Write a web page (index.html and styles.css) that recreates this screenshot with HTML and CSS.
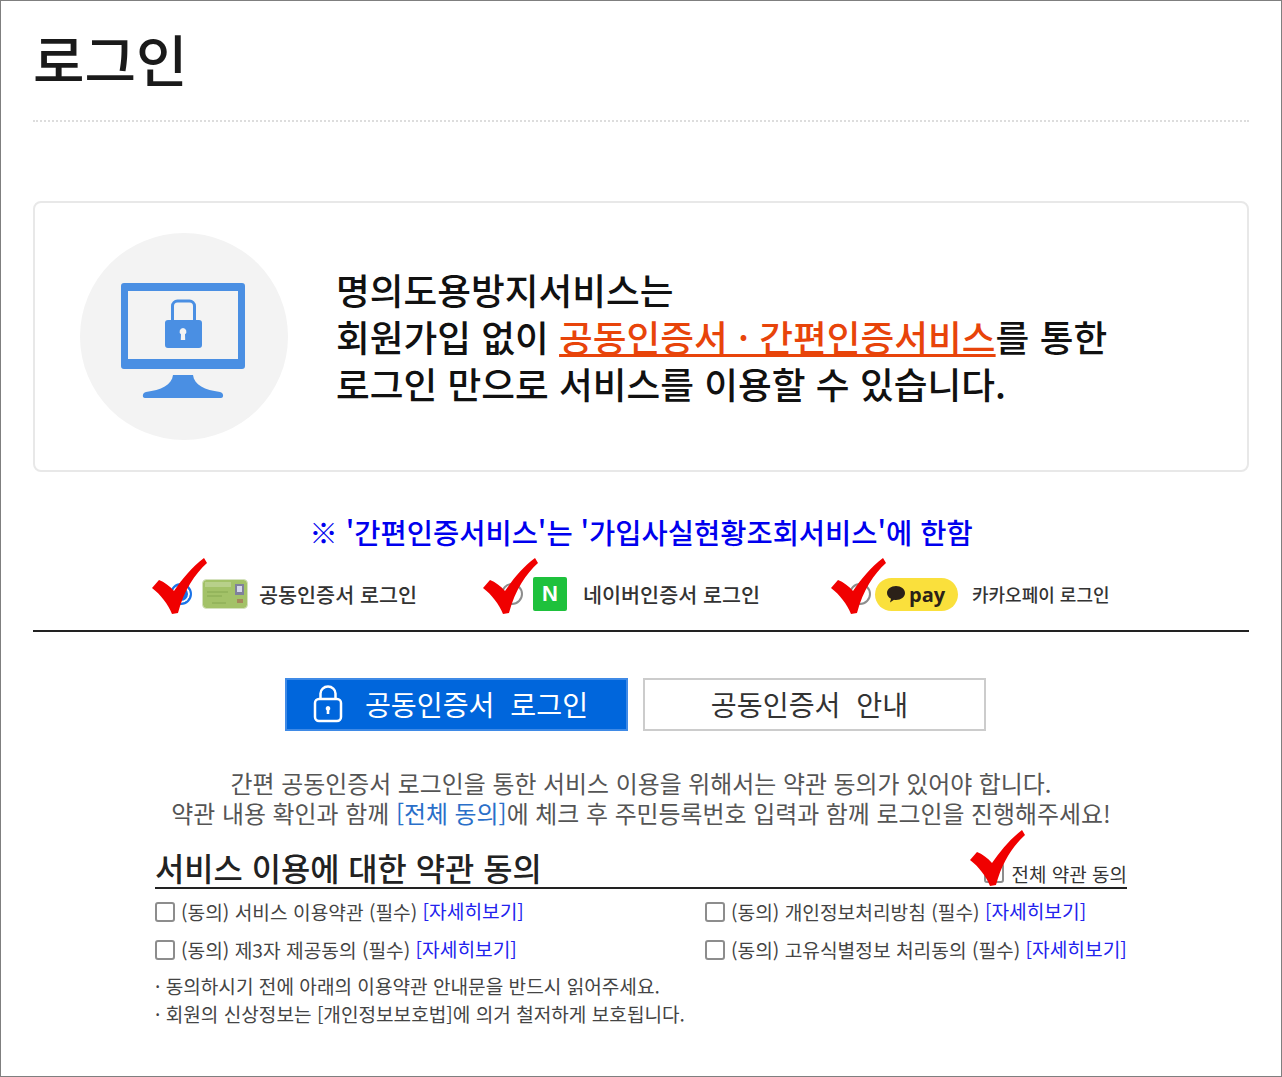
FILE: index.html
```html
<!DOCTYPE html>
<html lang="ko">
<head>
  <meta charset="UTF-8">
  <title>로그인</title>
  <link rel="stylesheet" href="styles.css">
</head>
<body>

<div class="frame">
  <h1 class="page-title">로그인</h1>

  <div class="intro-box">
    <div class="intro-icon">
      <svg class="monitor" width="124" height="115" viewBox="0 0 124 115">
        <path fill="#4a8fe3" fill-rule="evenodd" d="M3 0H121a3 3 0 0 1 3 3V83a3 3 0 0 1-3 3H3a3 3 0 0 1-3-3V3a3 3 0 0 1 3-3ZM7 8V76H117V8Z"/>
        <path fill="#4a8fe3" d="M52 92H72C73 102 84 107 99 109C103 110 103 115 100 115H24C21 115 21 110 25 109C40 107 51 102 52 92Z"/>
        <path fill="none" stroke="#4a8fe3" stroke-width="3" d="M51.500 38V23a5 5 0 0 1 5-5H68.500a5 5 0 0 1 5 5V38"/>
        <path fill="#4a8fe3" fill-rule="evenodd" d="M47 37H78a3 3 0 0 1 3 3V62a3 3 0 0 1-3 3H47a3 3 0 0 1-3-3V40a3 3 0 0 1 3-3ZM62 45a3.500 3.500 0 0 0-2 6.300L59.800 57H64.200L64 51.300A3.500 3.500 0 0 0 62 45Z"/>
      </svg>
    </div>
    <p class="intro-text">
      명의도용방지서비스는<br>
      회원가입 없이 <u class="accent">공동인증서 · 간편인증서비스</u>를 통한<br>
      로그인 만으로 서비스를 이용할 수 있습니다.
    </p>
  </div>

  <p class="notice">※ '간편인증서비스'는 '가입사실현황조회서비스'에 한함</p>

  <div class="methods">
    <label class="method method-cert">
      <span class="radio on"></span>
      <svg class="cert-card" width="46" height="30" viewBox="0 0 46 30">
        <rect x="0.500" y="0.500" width="45" height="29" rx="4" fill="#a3c268" stroke="#d5e2bf"/>
        <rect x="3" y="3" width="26" height="5" fill="#b8d08a"/>
        <path d="M5 13H26M5 17H20M10 24H24" stroke="#86a850" stroke-width="1"/>
        <rect x="33" y="5" width="9" height="11" fill="#7f809c"/>
        <rect x="35" y="7" width="5" height="6" fill="#d5d8ea"/>
        <rect x="35" y="20" width="6" height="4" fill="#a5865a"/>
      </svg>
      <span class="method-name">공동인증서 로그인</span>
      <svg class="check" viewBox="0 0 56 58"><path d="M1 30L8 22C13 24 19 28 23 33C31 21 41 9 53 0L56 5C44 16 33 32 27 55L21 56C17 46 10 37 1 30Z"/></svg>
    </label>
    <label class="method method-naver">
      <span class="radio"></span>
      <span class="naver-logo">N</span>
      <span class="method-name">네이버인증서 로그인</span>
      <svg class="check" viewBox="0 0 56 58"><path d="M1 30L8 22C13 24 19 28 23 33C31 21 41 9 53 0L56 5C44 16 33 32 27 55L21 56C17 46 10 37 1 30Z"/></svg>
    </label>
    <label class="method method-kakao">
      <span class="radio"></span>
      <span class="kakao-logo">
        <svg width="20" height="18" viewBox="0 0 20 18"><path fill="#2b2118" d="M10 1C15 1 19 4 19 8C19 12 15 15 10 15C9 15 8.500 15 8 14.800L4 17.500L5 13.700C2.500 12.500 1 10.500 1 8C1 4 5 1 10 1Z"/></svg>
        pay
      </span>
      <span class="method-name small">카카오페이 로그인</span>
      <svg class="check" viewBox="0 0 56 58"><path d="M1 30L8 22C13 24 19 28 23 33C31 21 41 9 53 0L56 5C44 16 33 32 27 55L21 56C17 46 10 37 1 30Z"/></svg>
    </label>
  </div>

  <div class="tabs">
    <a class="tab active">
      <svg width="30" height="38" viewBox="0 0 30 38">
        <rect x="2" y="14" width="26" height="22" rx="4" fill="none" stroke="#fff" stroke-width="2.500"/>
        <path d="M7.500 14V8.500a7.500 7 0 0 1 15 0V14" fill="none" stroke="#fff" stroke-width="2.500"/>
        <path d="M15 21a2.500 2.500 0 0 0-1.300 4.500V29h2.600V25.500A2.500 2.500 0 0 0 15 21Z" fill="#fff"/>
      </svg>
      공동인증서&nbsp; 로그인
    </a>
    <a class="tab">공동인증서&nbsp; 안내</a>
  </div>

  <p class="guide">
    간편 공동인증서 로그인을 통한 서비스 이용을 위해서는 약관 동의가 있어야 합니다.<br>
    약관 내용 확인과 함께 <span class="guide-link">[전체 동의]</span>에 체크 후 주민등록번호 입력과 함께 로그인을 진행해주세요!
  </p>

  <div class="terms">
    <div class="terms-head">
      <h2>서비스 이용에 대한 약관 동의</h2>
      <label class="agree-all">
        <span class="box"></span>전체 약관 동의
        <svg class="check" viewBox="0 0 56 58"><path d="M1 30L8 22C13 24 19 28 23 33C31 21 41 9 53 0L56 5C44 16 33 32 27 55L21 56C17 46 10 37 1 30Z"/></svg>
      </label>
    </div>
    <div class="terms-grid">
      <label class="term"><span class="box"></span>(동의) 서비스 이용약관 (필수) <a class="more">[자세히보기]</a></label>
      <label class="term"><span class="box"></span>(동의) 개인정보처리방침 (필수) <a class="more">[자세히보기]</a></label>
      <label class="term"><span class="box"></span>(동의) 제3자 제공동의 (필수) <a class="more">[자세히보기]</a></label>
      <label class="term"><span class="box"></span>(동의) 고유식별정보 처리동의 (필수) <a class="more">[자세히보기]</a></label>
    </div>
    <p class="terms-note">· 동의하시기 전에 아래의 이용약관 안내문을 반드시 읽어주세요.</p>
    <p class="terms-note">· 회원의 신상정보는 [개인정보보호법]에 의거 철저하게 보호됩니다.</p>
  </div>
</div>

</body>
</html>
```

FILE: styles.css
```css
* { box-sizing: border-box; }
html, body { margin: 0; padding: 0; }
body { background: #fff; color: #333; font-family: "Noto Sans CJK KR", "Noto Sans", sans-serif; }

.frame { width: 1282px; height: 1077px; border: 1px solid #7f7f7f; padding: 0 32px; overflow: hidden; }

.page-title { margin: 0; height: 121px; padding-top: 21px; border-bottom: 2px dotted #ddd; font-size: 56px; line-height: 72px; font-weight: 500; color: #1a1a1a; }

.intro-box { display: flex; align-items: center; margin-top: 79px; height: 271px; padding-left: 45px; border: 2px solid #e8e8e8; border-radius: 8px; }
.intro-icon { flex: none; display: flex; align-items: center; justify-content: center; width: 208px; height: 207px; border-radius: 50%; background: #f3f3f3; }
.monitor { margin: 7px 2px 0 0; }
.intro-text { margin: 0 0 0 48px; font-size: 36.7px; line-height: 47px; font-weight: 500; color: #111; }
.accent { color: #e8440a; }

.notice { margin: 40px 0 0; text-align: center; font-size: 28.5px; line-height: 40px; font-weight: 500; color: #0000ee; }

.methods { display: flex; height: 80px; padding: 24px 0 0 137px; border-bottom: 2px solid #222; }
.method { position: relative; display: flex; align-items: center; height: 36px; font-size: 20.7px; font-weight: 500; }
.method-cert { width: 331px; }
.method-naver { width: 348px; }
.method-kakao { width: 300px; }
.method-name { color: #333; }
.method-name.small { font-size: 18px; }

.radio { flex: none; width: 22px; height: 22px; margin: 0 10px 0 0; border: 2px solid #8d8d8d; border-radius: 50%; background: #fff; }
.radio.on { border-color: #1a73e8; background: #1a73e8; box-shadow: inset 0 0 0 2px #fff; }

.cert-card { flex: none; margin-right: 11px; }
.naver-logo { flex: none; display: flex; align-items: center; justify-content: center; width: 34px; height: 34px; margin-right: 16px; border-radius: 2px; background: #1ec13c; color: #fff; font: 700 22px "Liberation Sans", sans-serif; }
.method-naver .radio { margin-right: 10px; }
.method-kakao .radio { margin-right: 4px; }
.kakao-logo { flex: none; display: flex; align-items: center; gap: 3px; width: 83px; height: 33px; margin-right: 14px; padding-left: 11px; border-radius: 17px; background: #fae03c; color: #2b2118; font: 700 20px "Open Sans", sans-serif; }

.check { position: absolute; width: 56px; height: 58px; left: -19px; top: -18px; fill: #f00000; }

.tabs { display: flex; justify-content: center; gap: 15px; margin: 46px 0 0 -11px; }
.tab { display: flex; align-items: center; justify-content: center; gap: 22px; width: 343px; height: 53px; padding: 0 10px 2px 0; border: 2px solid #ccc; font-size: 28.2px; color: #333; }
.tab.active { padding-right: 12px; background: #0066dc; border-color: #3f8ae6; color: #fff; }

.guide { margin: 37px 0 0; text-align: center; font-size: 23.9px; line-height: 30px; color: #555; }
.guide-link { color: #2a6fc9; }

.terms { width: 972px; margin: 15px 0 0 122px; }
.terms-head { display: flex; justify-content: space-between; align-items: flex-end; height: 46px; border-bottom: 2px solid #222; }
.terms-head h2 { margin: 0; font-size: 31.8px; line-height: 40px; font-weight: 500; color: #222; }
.agree-all { position: relative; display: flex; align-items: center; font-size: 19px; height: 28px; color: #333; }
.agree-all .check { left: -15px; top: -29px; }
.agree-all .box { margin-right: 7px; }

.box { flex: none; display: inline-block; width: 20px; height: 20px; margin-right: 6px; border: 2px solid #8d8d8d; border-radius: 3px; background: #fff; }

.terms-grid { display: grid; grid-template-columns: 550px 1fr; row-gap: 8px; margin-top: 8px; }
.term { display: flex; align-items: center; gap: 0; height: 30px; font-size: 19.2px; color: #444; white-space: pre; }
.more { color: #2222ee; margin-top: -3px; }

.terms-note { margin: 0; font-size: 19.1px; line-height: 28px; color: #444; }
.terms-grid + .terms-note { margin-top: 7px; }
```
